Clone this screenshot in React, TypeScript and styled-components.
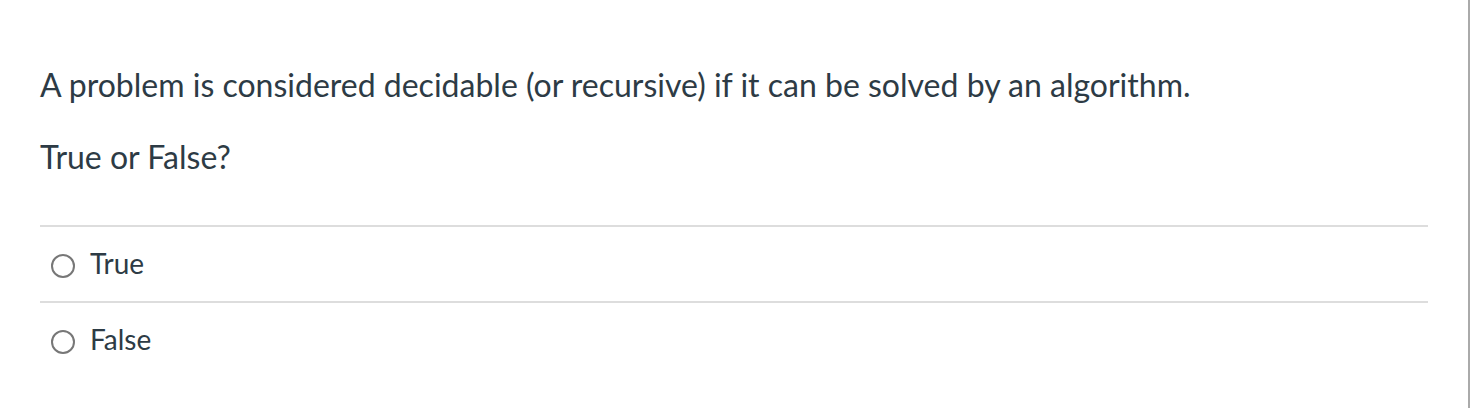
import React from "react";
import styled, { createGlobalStyle } from "styled-components";

const GlobalStyle = createGlobalStyle`
  html, body {
    margin: 0;
    padding: 0;
    background: #ffffff;
  }
  body {
    font-family: Lato, "Helvetica Neue", Arial, sans-serif;
    color: #2d3b45;
  }
`;

const Page = styled.div`
  width: 1470px;
  height: 408px;
  box-sizing: border-box;
  border-right: 2px solid #aaaaaa;
  padding: 64px 40px 0 40px;
  display: flex;
  flex-direction: column;
`;

const Question = styled.div`
  width: 1388px;
`;

const Para = styled.p`
  margin: 0 0 31px 0;
  font-size: 32px;
  line-height: 41px;

  &:last-of-type {
    margin-bottom: 0;
  }
`;

const Answers = styled.div`
  margin-top: 48px;
  display: flex;
  flex-direction: column;
`;

const Answer = styled.label`
  display: flex;
  align-items: center;
  height: 74px;
  border-top: 2px solid #dddddd;
  padding-left: 11px;
  gap: 15px;
  font-size: 28px;
  cursor: pointer;
`;

const Radio = styled.span`
  width: 20px;
  height: 20px;
  margin-top: 3px;
  border: 2px solid #777777;
  border-radius: 50%;
  flex-shrink: 0;
`;

const Label = styled.span`
  margin-top: -3px;
`;

const options = ["True", "False"];

export default function App() {
  return (
    <>
      <GlobalStyle />
      <Page>
        <Question>
          <Para>
            A problem is considered decidable (or recursive) if it can be solved
            by an algorithm.
          </Para>
          <Para>True or False?</Para>
          <Answers>
            {options.map((o) => (
              <Answer key={o}>
                <Radio />
                <Label>{o}</Label>
              </Answer>
            ))}
          </Answers>
        </Question>
      </Page>
    </>
  );
}
